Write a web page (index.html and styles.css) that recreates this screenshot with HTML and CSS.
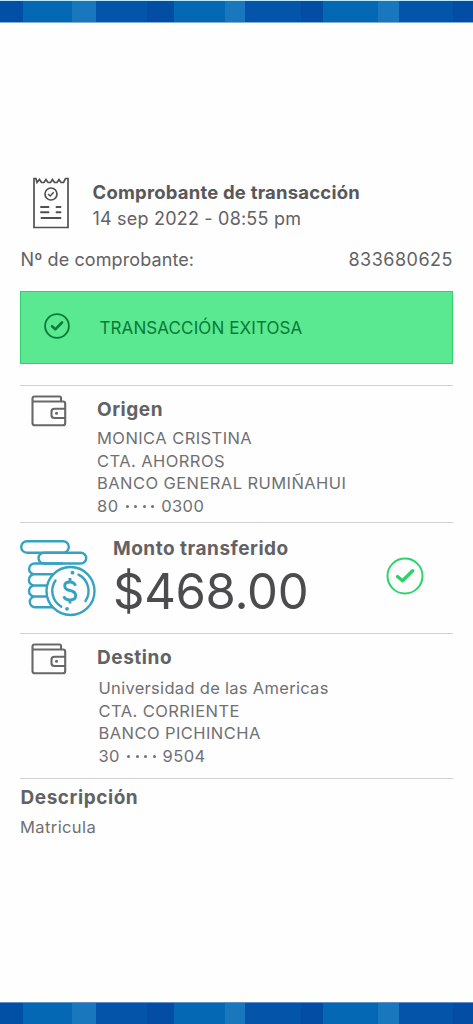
FILE: index.html
```html
<!DOCTYPE html>
<html lang="es">
<head>
<meta charset="utf-8">
<title>Comprobante de transacción</title>
<link rel="stylesheet" href="styles.css">
</head>
<body>
<svg width="0" height="0" class="defs">
  <symbol id="wallet" viewBox="0 0 36 32">
    <g fill="none" stroke="#68686a" stroke-width="2.1" stroke-linejoin="round">
      <path d="M30 6V2.800Q30 1.500 28.700 1.500H3.500Q1.500 1.500 1.500 3.500V28Q1.500 30.300 3.800 30.300H32Q34.200 30.300 34.200 28V8.700Q34.200 6.500 32 6.500H1.500"/>
      <path d="M34 13.700H23.500Q20.500 13.700 20.500 16.500V20.500Q20.500 23 23.500 23H34"/>
    </g>
    <circle cx="25.500" cy="18.300" r="1.500" fill="#68686a"/>
  </symbol>
</svg>
<div class="page">
  <div class="band band-top"></div>
  <main class="receipt">
    <header class="head">
      <svg class="ticket" width="38" height="54" viewBox="0 0 38 54">
        <g fill="none" stroke="#505052" stroke-width="2">
          <path d="M2 1.500V50.500H36V1.500H33.500L31.500 5.500H29L27 2.500L25 5.500H22.500L20.500 2.500L18.500 5.500H16L14 2.500L12 5.500H9.500L7.500 2.500L5 5.500L4 1.500Z" stroke-width="1.700"/>
          <circle cx="19" cy="17" r="6" stroke-width="1.700"/>
          <path d="M16 17L18.200 19L21.700 15.200" stroke-width="1.500"/>
          <path d="M9 30H16.500M24.500 30H28.500M9 35.300H16.500M24.500 35.300H28.500M9.500 41H28.500" stroke-linecap="round" stroke-width="1.900"/>
        </g>
      </svg>
      <div>
        <h1 class="title">Comprobante de transacción</h1>
        <p class="date">14 sep 2022 - 08:55 pm</p>
      </div>
    </header>
    <div class="number"><span class="number-label">Nº de comprobante:</span><span class="number-value">833680625</span></div>
    <div class="banner">
      <svg width="26" height="26" viewBox="0 0 26 26" fill="none" stroke="#087b37">
        <circle cx="13" cy="13" r="11.900" stroke-width="1.800"/>
        <path d="M8 13.300L11.300 16.300L18 9.500" stroke-width="2.600" stroke-linecap="round" stroke-linejoin="round"/>
      </svg>
      <span class="banner-text">TRANSACCIÓN EXITOSA</span>
    </div>
    <section class="account origin">
      <svg class="wallet" width="36" height="32"><use href="#wallet"/></svg>
      <div>
        <h2 class="label origin-label">Origen</h2>
        <p class="line">MONICA CRISTINA</p>
        <p class="line">CTA. AHORROS</p>
        <p class="line">BANCO GENERAL RUMIÑAHUI</p>
        <p class="line">80 <span class="dots"><i></i><i></i><i></i><i></i></span> 0300</p>
      </div>
    </section>
    <section class="amount">
      <svg class="coins" width="78" height="80" viewBox="0 0 78 80" fill="none" stroke="#35a3c0" stroke-width="2.400">
        <rect x="2.200" y="2.200" width="47.600" height="11.500" rx="5.750"/>
        <rect x="19.500" y="13.700" width="47.700" height="10.800" rx="5.400"/>
        <path d="M44 24.500H15.500A5.400 5.400 0 0 0 15.500 35.300H34M15.500 35.300A5.500 5.500 0 0 0 15.500 46.500H28M15.500 46.500A5.500 5.500 0 0 0 15.500 57.500H28M15.500 57.500A5.400 5.400 0 0 0 15.500 68.200H34"/>
        <circle cx="51.500" cy="52" r="24" fill="#fefefe"/>
        <path d="M36.500 41.500A18.300 18.300 0 0 0 42.300 67.700M59.500 35.600A18.300 18.300 0 0 1 66.500 62" stroke-width="2.400" stroke-linecap="round"/>
        <path d="M56.500 46.800Q55.200 43 51 43Q45.700 43 45.700 46.700Q45.700 50.500 51 51.500Q56.700 52.600 56.700 56.800Q56.700 61 51 61Q46 61 44.800 57.200M51 39V43M51 61V64.500" stroke-width="2.900"/>
        <g fill="#35a3c0" stroke="none"><circle cx="53.500" cy="33.700" r="1.900"/><circle cx="48" cy="69.800" r="1.900"/></g>
      </svg>
      <div class="amount-text">
        <h2 class="label amount-label">Monto transferido</h2>
        <p class="value">$468.00</p>
      </div>
      <svg class="done" width="38" height="38" viewBox="0 0 38 38" fill="none" stroke="#2bd368">
        <circle cx="19" cy="19" r="17.500" stroke-width="2"/>
        <path d="M11.500 19.500L16.500 23.700L26.700 13.700" stroke-width="3.400" stroke-linecap="round" stroke-linejoin="round"/>
      </svg>
    </section>
    <section class="account target">
      <svg class="wallet" width="36" height="32"><use href="#wallet"/></svg>
      <div>
        <h2 class="label target-label">Destino</h2>
        <p class="line name">Universidad de las Americas</p>
        <p class="line">CTA. CORRIENTE</p>
        <p class="line">BANCO PICHINCHA</p>
        <p class="line">30 <span class="dots"><i></i><i></i><i></i><i></i></span> 9504</p>
      </div>
    </section>
    <section class="description">
      <h2 class="label description-label">Descripción</h2>
      <p class="note">Matricula</p>
    </section>
  </main>
  <div class="band band-bottom"></div>
</div>
</body>
</html>
```
FILE: styles.css
```css
* { box-sizing: border-box; margin: 0; padding: 0; }
body { background: #fefefe; font-family: Inter, "Liberation Sans", sans-serif; color: #626264; }
.defs { position: absolute; }
.page { height: 1024px; display: flex; flex-direction: column; overflow: hidden; }
svg { display: block; flex: none; }
p, h1, h2, span { white-space: nowrap; }
.band {
  height: 23px; flex: none;
  background: linear-gradient(90deg, #0250a6 23px, #0468b4 23px 72px, #1977bd 72px 96px, #0455a9 96px 147px, #034da4 147px 174px, #0468b4 174px 225px, #1977bd 225px 245px, #0455a9 245px 301px, #034da4 301px 323px, #0468b4 323px 378px, #1977bd 378px 399px, #0455a9 399px 453px, #034da4 453px);
}
.band-top { border-top: 1px solid #b9e9f8; border-bottom: 1px solid #86aed5; }
.band-bottom { height: 22px; border-top: 1px solid #5c92c9; margin-top: auto; }
.receipt { padding: 154px 20px 0; }
.head { display: flex; gap: 22px; padding-left: 12px; height: 70px; }
.title { font-size: 18.500px; line-height: 25px; font-weight: 700; letter-spacing: .2px; color: #58585a; padding: 3px 0 0 .5px; }
.date { font-size: 18px; line-height: 25px; letter-spacing: .2px; padding: 1px 0 0 .5px; }
.number { display: flex; justify-content: space-between; font-size: 18px; line-height: 26px; height: 44px; }
.number-label { padding-left: .5px; letter-spacing: .1px; }
.number-value { letter-spacing: .5px; }
.banner { height: 73px; border: 1px solid #31cf70; background: #5ae891; display: flex; align-items: center; color: #087b37; padding-left: 23px; gap: 29.500px; }
.banner svg { margin-bottom: 4px; }
.banner-text { font-size: 17px; letter-spacing: .1px; padding-top: 1px; }
.account { display: flex; gap: 30px; padding: 9px 0 0 11px; border-top: 1px solid #d1d1d1; }
.origin { margin-top: 21px; height: 137px; }
.target { height: 145px; }
.label { font-size: 19px; line-height: 26px; font-weight: 700; letter-spacing: .55px; }
.origin-label { margin: 2px 0 4px; }
.target-label { margin: 2px 0 6px; }
.line { font-size: 16.500px; line-height: 22.700px; letter-spacing: .43px; color: #707072; }
.name { letter-spacing: .3px; }
.target .line { padding-left: 1.500px; }
.dots { display: inline-flex; gap: 5.500px; vertical-align: 4px; margin: 0 2px; }
.dots i { width: 3px; height: 3px; border-radius: 50%; background: #707072; }
.amount { height: 111px; border-top: 1px solid #d1d1d1; display: flex; padding-top: 17px; }
.coins { margin: -1px 0 0 -1px; }
.amount-text { width: 273px; margin-left: 16px; }
.amount-label { margin-top: -4px; letter-spacing: .5px; }
.value { font-size: 49px; line-height: 60px; letter-spacing: -.3px; color: #4c4c4e; }
.done { margin-top: 17px; }
.description { border-top: 1px solid #d1d1d1; padding-top: 6px; }
.description-label { margin-bottom: 4px; padding-left: .5px; }
.note { font-size: 16.500px; line-height: 24px; letter-spacing: .4px; color: #707072; }
```
